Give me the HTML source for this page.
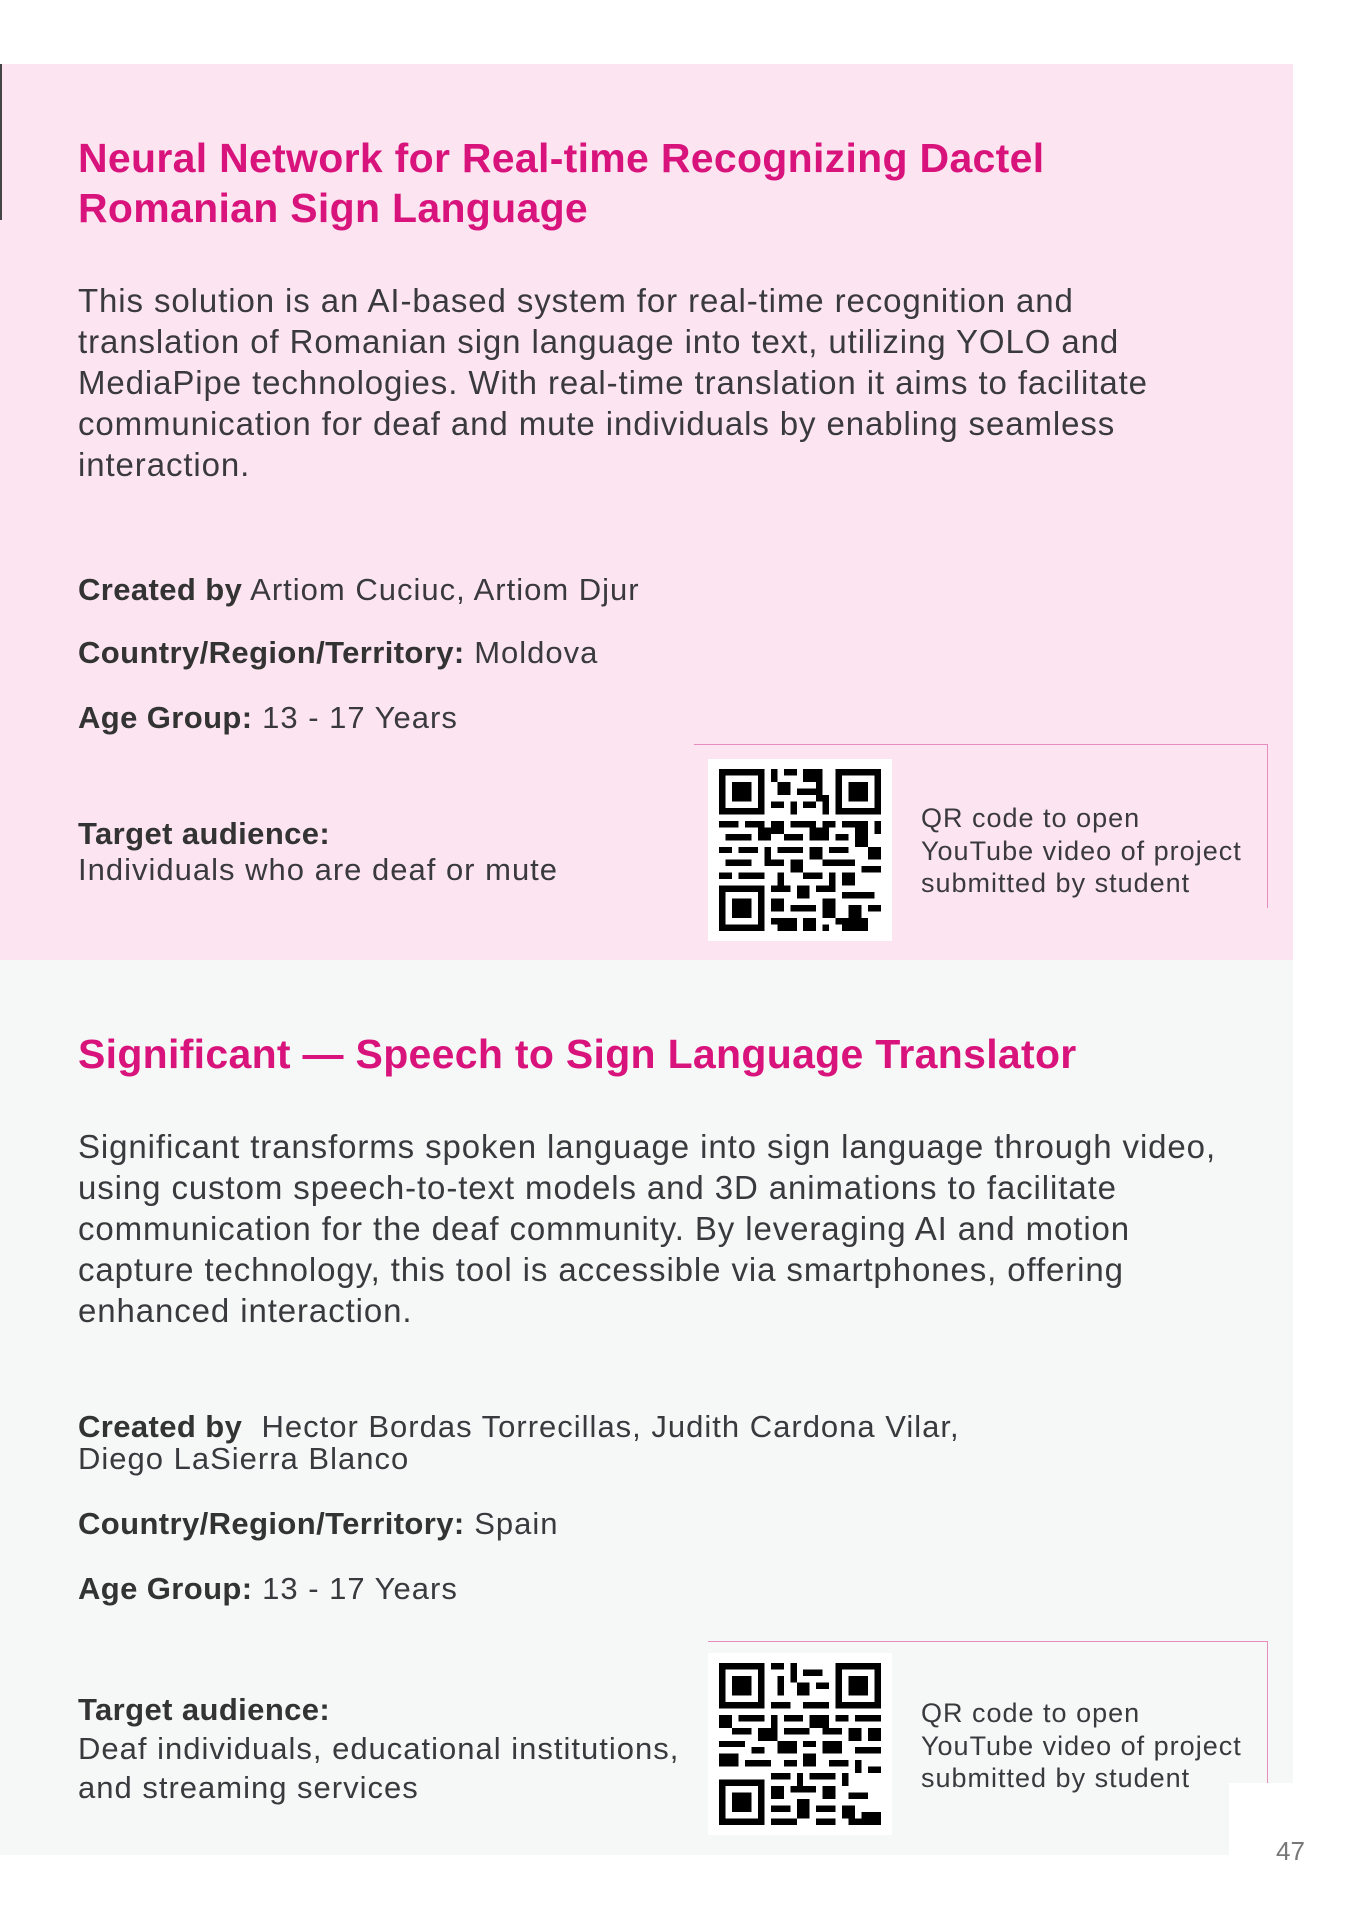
<!DOCTYPE html>
<html><head><meta charset="utf-8"><style>
*{margin:0;padding:0;box-sizing:border-box}
body{width:1358px;height:1920px;background:#fff;position:relative;overflow:hidden;font-family:"Liberation Sans",sans-serif;color:#3a3a3e}
.a{position:absolute;white-space:nowrap}
.t{color:#d9137c;font-weight:bold;font-size:41px;letter-spacing:0.3px;line-height:50px}
.b{font-size:33px;line-height:41px;letter-spacing:0.9px}
.l{font-size:31px;line-height:36px;letter-spacing:1px}
.l b{color:#333;letter-spacing:0.4px}
.q{font-size:27px;line-height:32.5px;letter-spacing:1px}
.qr{position:absolute;background:#fff;width:184px;height:182px}
.qr svg{position:absolute;left:10px;top:10px;width:164px;height:162px}
</style></head><body>
<div class="a" style="left:0;top:64px;width:1293px;height:896px;background:#fce5f1"></div>
<div class="a" style="left:0;top:64px;width:2px;height:156px;background:#444"></div>
<div class="a" style="left:0;top:960px;width:1293px;height:895px;background:#f6f8f7"></div>
<div class="a" style="left:1229px;top:1783px;width:70px;height:75px;background:#fff"></div>

<div class="a t" style="left:78px;top:133px">Neural Network for Real-time Recognizing Dactel<br>Romanian Sign Language</div>
<div class="a b" style="left:78px;top:280px">This solution is an AI-based system for real-time recognition and<br>translation of Romanian sign language into text, utilizing YOLO and<br>MediaPipe technologies. With real-time translation it aims to facilitate<br>communication for deaf and mute individuals by enabling seamless<br>interaction.</div>
<div class="a l" style="left:78px;top:572px"><b>Created by</b> Artiom Cuciuc, Artiom Djur</div>
<div class="a l" style="left:78px;top:635px"><b>Country/Region/Territory:</b> Moldova</div>
<div class="a l" style="left:78px;top:700px"><b>Age Group:</b> 13 - 17 Years</div>
<div class="a l" style="left:78px;top:816px"><b>Target audience:</b><br>Individuals who are deaf or mute</div>
<div class="a" style="left:694px;top:744px;width:574px;height:164px;border-top:1.5px solid #e78cbf;border-right:1.5px solid #e78cbf"></div>
<div class="qr" style="left:708px;top:759px"><svg viewBox="0 0 25 25" shape-rendering="crispEdges"><path fill="#000" d="M0 0h7v7h-7zM18 0h7v7h-7zM0 18h7v7h-7z"/><path fill="#fff" d="M1 1h5v5h-5zM19 1h5v5h-5zM1 19h5v5h-5z"/><path fill="#000" d="M2 2h3v3h-3zM20 2h3v3h-3zM2 20h3v3h-3z"/><path fill="#000" d="M8 0h1v2h-1zM10 0h2v1h-2zM13 0h3v2h-3zM9 2h2v2h-2zM12 3h3v1h-3zM15 2h1v3h-1zM8 5h2v1h-2zM11 5h1v2h-1zM13 5h2v1h-2zM16 4h1v3h-1zM0 8h3v1h-3zM4 8h3v1h-3zM8 8h2v2h-2zM11 8h4v1h-4zM16 8h2v1h-2zM19 8h4v1h-4zM24 8h1v2h-1zM1 10h4v1h-4zM6 9h2v2h-2zM10 10h3v1h-3zM14 9h3v2h-3zM18 10h2v1h-2zM21 9h2v3h-2zM0 12h2v1h-2zM3 12h3v1h-3zM7 12h1v3h-1zM9 12h4v1h-4zM14 12h2v2h-2zM17 12h3v1h-3zM23 12h2v2h-2zM1 14h4v1h-4zM8 14h2v1h-2zM11 14h2v2h-2zM16 14h5v1h-5zM22 15h3v1h-3zM0 16h2v1h-2zM3 16h4v1h-4zM9 16h1v2h-1zM13 16h3v1h-3zM17 16h1v2h-1zM19 16h2v2h-2zM8 18h3v1h-3zM12 18h2v2h-2zM15 18h3v1h-3zM19 19h5v1h-5zM8 20h2v2h-2zM11 21h4v1h-4zM16 20h2v3h-2zM20 21h2v2h-2zM23 21h2v1h-2zM8 23h4v1h-4zM13 23h2v2h-2zM18 23h5v1h-5zM9 24h3v1h-3zM16 24h1v1h-1zM19 24h4v1h-4z"/></svg></div>
<div class="a q" style="left:921px;top:802px">QR code to open<br>YouTube video of project<br>submitted by student</div>

<div class="a t" style="left:78px;top:1029px">Significant — Speech to Sign Language Translator</div>
<div class="a b" style="left:78px;top:1126px">Significant transforms spoken language into sign language through video,<br>using custom speech-to-text models and 3D animations to facilitate<br>communication for the deaf community. By leveraging AI and motion<br>capture technology, this tool is accessible via smartphones, offering<br>enhanced interaction.</div>
<div class="a l" style="left:78px;top:1411px;line-height:32px"><b>Created by</b>&nbsp; Hector Bordas Torrecillas, Judith Cardona Vilar,<br>Diego LaSierra Blanco</div>
<div class="a l" style="left:78px;top:1506px"><b>Country/Region/Territory:</b> Spain</div>
<div class="a l" style="left:78px;top:1571px"><b>Age Group:</b> 13 - 17 Years</div>
<div class="a l" style="left:78px;top:1690px;line-height:39px"><b>Target audience:</b><br>Deaf individuals, educational institutions,<br>and streaming services</div>
<div class="a" style="left:708px;top:1641px;width:560px;height:142px;border-top:1.5px solid #e78cbf;border-right:1.5px solid #e78cbf"></div>
<div class="qr" style="left:708px;top:1653px"><svg viewBox="0 0 25 25" shape-rendering="crispEdges"><path fill="#000" d="M0 0h7v7h-7zM18 0h7v7h-7zM0 18h7v7h-7z"/><path fill="#fff" d="M1 1h5v5h-5zM19 1h5v5h-5zM1 19h5v5h-5z"/><path fill="#000" d="M2 2h3v3h-3zM20 2h3v3h-3zM2 20h3v3h-3z"/><path fill="#000" d="M8 0h2v1h-2zM11 0h1v3h-1zM13 1h3v1h-3zM9 2h1v3h-1zM12 3h2v2h-2zM15 3h2v1h-2zM8 6h3v1h-3zM13 6h4v1h-4zM0 8h2v2h-2zM3 8h4v1h-4zM8 8h1v2h-1zM10 8h3v1h-3zM14 8h3v2h-3zM18 8h2v1h-2zM21 8h4v1h-4zM2 10h3v1h-3zM6 10h3v2h-3zM10 10h4v1h-4zM16 10h3v1h-3zM20 10h2v2h-2zM23 10h2v2h-2zM0 12h4v1h-4zM5 13h2v1h-2zM9 12h3v2h-3zM13 12h2v1h-2zM16 12h3v2h-3zM21 13h4v1h-4zM0 14h3v2h-3zM4 15h4v1h-4zM10 15h2v1h-2zM13 14h2v2h-2zM17 15h3v1h-3zM21 15h1v2h-1zM23 16h2v1h-2zM8 17h3v1h-3zM12 17h1v2h-1zM14 17h4v1h-4zM19 17h1v2h-1zM8 19h2v2h-2zM11 19h4v1h-4zM16 19h2v2h-2zM20 20h3v1h-3zM8 22h3v1h-3zM12 21h2v3h-2zM15 22h3v1h-3zM19 22h2v2h-2zM22 23h3v1h-3zM8 24h4v1h-4zM15 24h3v1h-3zM20 24h5v1h-5z"/></svg></div>
<div class="a q" style="left:921px;top:1697px">QR code to open<br>YouTube video of project<br>submitted by student</div>

<div class="a" style="left:1276px;top:1836px;font-size:26px;color:#777">47</div>
</body></html>
